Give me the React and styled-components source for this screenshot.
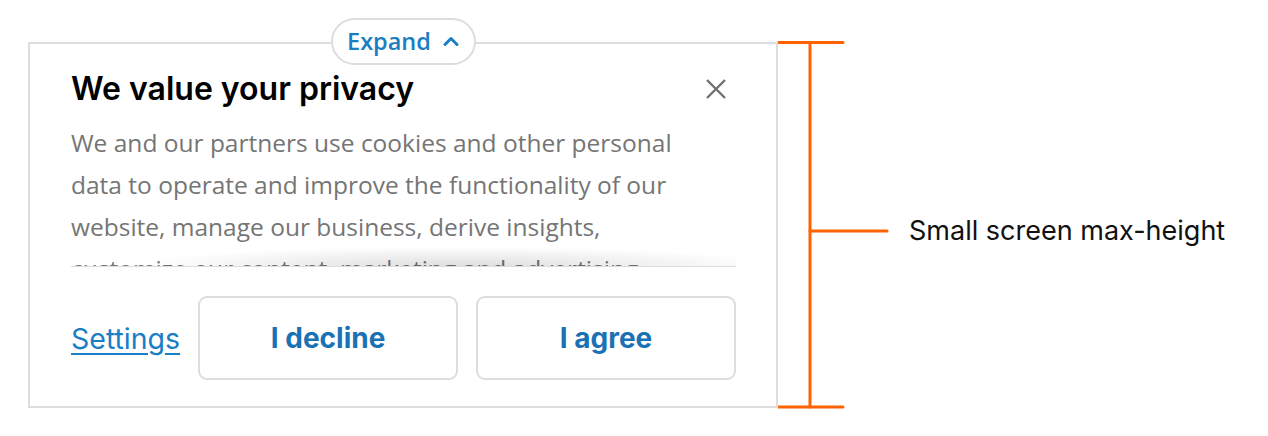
import React from "react";
import styled, { createGlobalStyle } from "styled-components";

const GlobalStyle = createGlobalStyle`
  html, body {
    margin: 0;
    padding: 0;
    background: #ffffff;
  }
  body {
    font-family: Inter, "Liberation Sans", sans-serif;
    -webkit-font-smoothing: antialiased;
  }
`;

const BLUE = "#1a7ec4";
const ORANGE = "#ff6200";

export default function App() {
  return (
    <>
      <GlobalStyle />
      <Page>
        <Banner>
          <ExpandPill type="button">
            Expand
            <svg width="18" height="12" viewBox="0 0 18 12" aria-hidden="true">
              <path
                d="M3 9.5 L9 3.5 L15 9.5"
                fill="none"
                stroke={BLUE}
                strokeWidth="3"
                strokeLinecap="round"
                strokeLinejoin="round"
              />
            </svg>
          </ExpandPill>

          <Header>
            <Title>We value your privacy</Title>
            <CloseButton type="button" aria-label="Close">
              <svg width="20" height="20" viewBox="0 0 20 20">
                <path
                  d="M1 1 L19 19 M19 1 L1 19"
                  stroke="#707070"
                  strokeWidth="2.4"
                  strokeLinecap="butt"
                />
              </svg>
            </CloseButton>
          </Header>

          <Body>
            <Copy>
              We and our partners use cookies and other personal data to
              operate and improve the functionality of our website, manage our
              business, derive insights, customize our content, marketing and
              advertising.
            </Copy>
          </Body>

          <Footer>
            <SettingsLink href="#">Settings</SettingsLink>
            <ActionButton type="button">I decline</ActionButton>
            <ActionButton type="button">I agree</ActionButton>
          </Footer>
        </Banner>

        <Bracket width="112" height="370" viewBox="0 0 112 370" aria-hidden="true">
          <g stroke={ORANGE} strokeWidth="3" strokeLinecap="round">
            <line x1="1.5" y1="1.5" x2="66" y2="1.5" />
            <line x1="33" y1="1.5" x2="33" y2="366" />
            <line x1="1.5" y1="366" x2="66" y2="366" />
            <line x1="33" y1="190" x2="110" y2="190" />
          </g>
        </Bracket>

        <Label>Small screen max-height</Label>
      </Page>
    </>
  );
}

const Page = styled.div`
  display: flex;
  align-items: flex-start;
  padding: 42px 0 0 28px;
`;

const Banner = styled.section`
  position: relative;
  box-sizing: border-box;
  width: 750px;
  max-height: 366px;
  height: 366px;
  border: 2px solid #dddddd;
  padding: 0 40px 0 41px;
  display: flex;
  flex-direction: column;
  background: #ffffff;
`;

const ExpandPill = styled.button`
  position: absolute;
  top: -26px;
  left: 301px;
  box-sizing: border-box;
  width: 145px;
  height: 47px;
  border: 2px solid #dddddd;
  border-radius: 24px;
  background: #ffffff;
  display: flex;
  align-items: center;
  justify-content: center;
  gap: 11px;
  padding: 0 0 2px 0;
  font-family: "Open Sans", Lato, sans-serif;
  font-weight: 600;
  font-size: 23.5px;
  color: ${BLUE};
  cursor: pointer;
`;

const Header = styled.div`
  display: flex;
  align-items: center;
  justify-content: space-between;
  padding-top: 26px;
`;

const Title = styled.h2`
  margin: 0;
  font-family: Inter, "Liberation Sans", sans-serif;
  font-weight: 600;
  font-size: 32px;
  line-height: 38px;
  color: #000000;
`;

const CloseButton = styled.button`
  border: none;
  background: none;
  padding: 0;
  margin: 0 10px 0 0;
  width: 20px;
  height: 20px;
  display: flex;
  cursor: pointer;
`;

const Body = styled.div`
  position: relative;
  flex: 1;
  overflow: hidden;
  margin-top: 14px;

  &::after {
    content: "";
    position: absolute;
    left: 0;
    right: 0;
    bottom: 0;
    height: 26px;
    background: radial-gradient(
      ellipse 65% 100% at 58% 100%,
      rgba(0, 0, 0, 0.13),
      rgba(0, 0, 0, 0) 75%
    );
    pointer-events: none;
  }
`;

const Copy = styled.p`
  margin: 0;
  max-width: 612px;
  font-family: "Open Sans", Lato, sans-serif;
  font-size: 24.5px;
  line-height: 42px;
  color: #757575;
`;

const Footer = styled.div`
  display: flex;
  align-items: center;
  gap: 18px;
  border-top: 1px solid #dddddd;
  padding: 29px 0 26px;
`;

const SettingsLink = styled.a`
  font-family: Inter, "Liberation Sans", sans-serif;
  font-size: 28.5px;
  color: ${BLUE};
  text-decoration: underline;
  text-decoration-thickness: 2px;
  text-underline-offset: 4px;
`;

const ActionButton = styled.button`
  box-sizing: border-box;
  width: 260px;
  height: 84px;
  border: 2px solid #dddddd;
  border-radius: 9px;
  background: #ffffff;
  font-family: Inter, "Liberation Sans", sans-serif;
  font-weight: 700;
  font-size: 28px;
  color: #1a72b5;
  cursor: pointer;
`;

const Bracket = styled.svg`
  display: block;
  margin: -1px 0 0 -1px;
`;

const Label = styled.div`
  margin: 173px 0 0 20px;
  font-family: Inter, "Liberation Sans", sans-serif;
  font-size: 27px;
  line-height: 32px;
  color: #111111;
`;
